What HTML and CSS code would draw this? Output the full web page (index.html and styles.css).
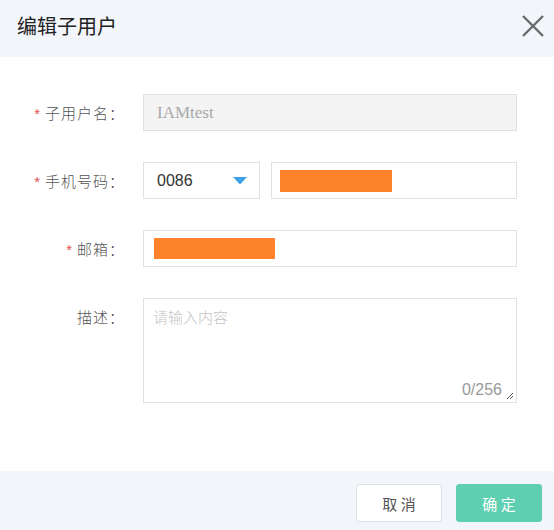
FILE: index.html
```html
<!DOCTYPE html>
<html lang="zh">
<head>
<meta charset="utf-8">
<link rel="stylesheet" href="styles.css">
</head>
<body>
<div class="dialog">
  <div class="header">
    <div class="title">编辑子用户</div>
    <svg class="close" width="22" height="22" viewBox="0 0 22 22"><path d="M1 1 L21 21 M21 1 L1 21" stroke="#6b6b6b" stroke-width="2.4" fill="none"/></svg>
  </div>
  <div class="body">
    <div class="row">
      <div class="label"><span class="req">*</span>子用户名：</div>
      <div class="field"><div class="input disabled">IAMtest</div></div>
    </div>
    <div class="row">
      <div class="label"><span class="req">*</span>手机号码：</div>
      <div class="field phone">
        <div class="input select"><span>0086</span><svg width="14" height="8" viewBox="0 0 14 8"><path d="M0 0 H14 L7 7.5 Z" fill="#3aa0e6"/></svg></div>
        <div class="input grow"><span class="mask mask-phone"></span></div>
      </div>
    </div>
    <div class="row">
      <div class="label"><span class="req">*</span>邮箱：</div>
      <div class="field"><div class="input"><span class="mask mask-mail"></span></div></div>
    </div>
    <div class="row row-desc">
      <div class="label">描述：</div>
      <div class="field"><div class="textarea"><span class="ph">请输入内容</span><span class="count">0/256</span><svg class="grip" width="8" height="8" viewBox="0 0 8 8"><path d="M1 7 L7 1 M4 7 L7 4" stroke="#555" stroke-width="1"/></svg></div></div>
    </div>
  </div>
  <div class="footer">
    <button class="btn cancel">取 消</button>
    <button class="btn ok">确 定</button>
  </div>
</div>
</body>
</html>
```

FILE: styles.css
```css
* { box-sizing: border-box; }
html, body { margin: 0; padding: 0; background: #fff; }
body { font-family: "Noto Sans CJK SC", "Noto Sans", sans-serif; color: #333; width: 554px; height: 530px; overflow: hidden; }
.dialog { width: 554px; height: 530px; display: flex; flex-direction: column; }
.header { height: 57px; background: #f2f5fa; display: flex; align-items: center; justify-content: space-between; padding: 0 10px 0 17px; }
.title { font-size: 20px; color: #222; font-weight: 400; margin-top: -6px; }
.close { margin-top: -6px; }
.body { flex: 1; padding-top: 37px; }
.row { display: flex; align-items: center; margin-bottom: 31px; }
.label { width: 143px; padding-right: 18px; text-align: right; font-size: 15px; color: #555; font-weight: 300; letter-spacing: 1px; }
.req { color: #e0504f; margin-right: 4px; font-family: "Liberation Sans", sans-serif; font-weight: 400; }
.field { width: 374px; }
.phone { display: flex; gap: 11px; }
.input { height: 37px; border: 1px solid #dfe1e4; background: #fff; display: flex; align-items: center; padding-left: 13px; font-size: 16px; color: #333; font-family: "Liberation Sans", sans-serif; }
.disabled { background: #f4f4f4; color: #a9a9a9; font-family: "Liberation Serif", serif; font-size: 17px; }
.select { width: 117px; justify-content: space-between; padding-right: 12px; }
.grow { flex: 1; padding-left: 8px; }
.mask { display: block; background: #fe832b; height: 22px; }
.mask-phone { width: 112px; }
.mask-mail { width: 121px; height: 21px; margin-left: -3px; }
.row-desc { align-items: flex-start; }
.row-desc .label { padding-top: 8px; }
.textarea { height: 105px; border: 1px solid #dfe1e4; position: relative; padding: 5px 9px; }
.ph { font-size: 15px; color: #c4c4c4; font-weight: 300; }
.count { position: absolute; right: 14px; bottom: 3px; font-family: "Liberation Sans", sans-serif; font-size: 16px; color: #999; }
.grip { position: absolute; right: 2px; bottom: 2px; }
.footer { height: 59px; background: #f2f5fa; display: flex; justify-content: flex-end; align-items: flex-start; padding: 13px 12px 0 0; gap: 14px; }
.btn { width: 86px; height: 38px; border-radius: 3px; font-size: 15px; font-family: "Noto Sans CJK SC", sans-serif; cursor: pointer; }
.cancel { background: #fff; border: 1px solid #dcdfe3; color: #555; }
.ok { background: #5ecfb1; border: 1px solid #5ecfb1; color: #fff; }
```
